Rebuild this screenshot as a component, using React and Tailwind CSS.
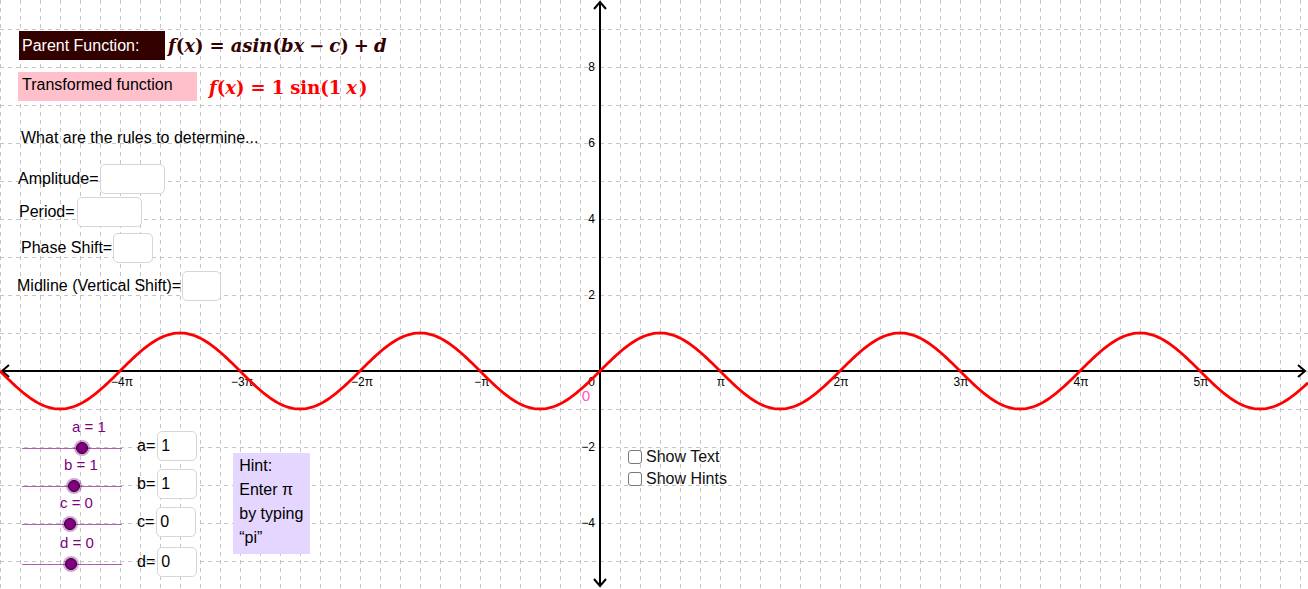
import React from 'react';

const W = 1308;
const H = 589;
const OX = 600;
const OY = 371;
const UX = 120 / Math.PI;
const UY = 38;

const sans = { fontFamily: '"Liberation Sans", Arial, sans-serif' };
const math = { fontFamily: '"DejaVu Serif", "Liberation Serif", serif' };

function curvePath() {
  let d = '';
  for (let px = 0; px <= W; px += 2) {
    const y = OY - UY * Math.sin((px - OX) / UX);
    d += `${px === 0 ? 'M' : 'L'}${px},${y.toFixed(2)} `;
  }
  return d;
}

function Graph() {
  const verticals = [];
  for (let x = 0; x <= W; x += 20) verticals.push(x);
  const horizontals = [];
  for (let k = -10; k <= 6; k++) {
    const y = OY + UY * k;
    if (y > 0 && y < H) horizontals.push(y);
  }
  const piLabels = [-4, -3, -2, -1, 1, 2, 3, 4, 5];
  const yLabels = [8, 6, 4, 2, -2, -4];

  return (
    <svg width={W} height={H} className="absolute inset-0" style={sans}>
      {verticals.map(x => (
        <line key={'v' + x} x1={x + 0.5} y1={0} x2={x + 0.5} y2={H} stroke="#c4c4c4" strokeWidth="1" strokeDasharray="4 4" />
      ))}
      {horizontals.map(y => (
        <line key={'h' + y} x1={0} y1={y + 0.5} x2={W} y2={y + 0.5} stroke="#c4c4c4" strokeWidth="1" strokeDasharray="4 4" />
      ))}

      {/* axes */}
      <line x1={2} y1={OY} x2={W - 3} y2={OY} stroke="#000" strokeWidth="2" />
      <line x1={OX} y1={2} x2={OX} y2={H - 3} stroke="#000" strokeWidth="2" />
      <polyline points={`${OX - 6},9 ${OX},2 ${OX + 6},9`} fill="none" stroke="#000" strokeWidth="2" />
      <polyline points={`${OX - 6},${H - 10} ${OX},${H - 3} ${OX + 6},${H - 10}`} fill="none" stroke="#000" strokeWidth="2" />
      <polyline points={`${W - 10},${OY - 6} ${W - 3},${OY} ${W - 10},${OY + 6}`} fill="none" stroke="#000" strokeWidth="2" />
      <polyline points={`9,${OY - 6} 2,${OY} 9,${OY + 6}`} fill="none" stroke="#000" strokeWidth="2" />

      {/* labels */}
      {piLabels.map(k => {
        const txt = k === 1 ? 'π' : k === -1 ? '−π' : `${k < 0 ? '−' : ''}${Math.abs(k)}π`;
        return (
          <text key={'p' + k} x={OX + 120 * k + (k < 0 ? 2 : 1)} y={386} fontSize="12" textAnchor="middle" fill="#000">
            {txt}
          </text>
        );
      })}
      <text x={595} y={386} fontSize="12" textAnchor="end" fill="#000">0</text>
      {yLabels.map(v => (
        <text key={'y' + v} x={595} y={OY - UY * v + 4} fontSize="12" textAnchor="end" fill="#000">
          {v < 0 ? '−' + Math.abs(v) : v}
        </text>
      ))}
      <text x={586} y={401} fontSize="15" textAnchor="middle" fill="#ff55cc">0</text>

      {/* f(x) */}
      <path d={curvePath()} fill="none" stroke="#ff0000" strokeWidth="2.8" strokeLinejoin="round" />
    </svg>
  );
}

function Box({ w, value }) {
  return (
    <div className={`${w} h-[30px] bg-white border border-[#d6d6d6] rounded-[5px] flex items-center pl-[3px] text-[16px] text-black`}>
      {value}
    </div>
  );
}

function Slider({ label, labelPad, point }) {
  return (
    <div className="flex flex-col w-[130px]">
      <span className={`${labelPad} text-[15px] leading-[16px] text-[#800080]`}>{label}</span>
      <svg width="130" height="26">
        <line x1="22" y1="13.5" x2="122" y2="13.5" stroke="#b060b0" strokeWidth="1" />
        <circle cx={point} cy="13" r="8" fill="#800080" opacity="0.35" />
        <circle cx={point} cy="13" r="5.5" fill="#800080" stroke="#2a002a" strokeWidth="1" />
      </svg>
    </div>
  );
}

function SliderRow({ name, value, labelPad, point, className }) {
  return (
    <div className={`flex items-end ${className}`}>
      <Slider label={`${name} = ${value}`} labelPad={labelPad} point={point} />
      <span className="ml-[7px] mb-[6px] text-[16px] leading-[18px]">{name}=</span>
      <div className="ml-[2px]">
        <Box w="w-[40px]" value={value} />
      </div>
    </div>
  );
}

function Checkbox({ label }) {
  return (
    <div className="flex items-center h-[22px]">
      <div className="w-[14px] h-[14px] border-[1.5px] border-[#777] rounded-[3px] bg-white" />
      <span className="ml-[4px] text-[16px] text-[#111]">{label}</span>
    </div>
  );
}

export default function App() {
  return (
    <div className="relative w-[1308px] h-[589px] overflow-hidden bg-white text-black" style={sans}>
      <Graph />

      <div className="absolute inset-0 flex">
        {/* left column: formulas, questions, sliders */}
        <div className="flex flex-col w-[400px]">
          <div className="flex items-center mt-[31px] pl-[19px]">
            <div className="w-[146px] h-[29px] bg-[#330000] text-white text-[16px] flex items-center pl-[3px]">
              Parent Function:
            </div>
            <div className="ml-[3px] text-[18px] font-bold text-[#330000] whitespace-nowrap" style={math}>
              <i>f</i>(<i>x</i>)<span className="mx-[6px]">=</span><i>asin</i>(<i>bx</i>
              <span className="mx-[5px]">−</span><i>c</i>)<span className="mx-[5px]">+</span><i>d</i>
            </div>
          </div>

          <div className="flex items-center mt-[11px] pl-[18px]">
            <div className="w-[179px] h-[29px] bg-[#ffc0cb] text-[16px] flex items-center pl-[4px] pb-[2px]">
              Transformed function
            </div>
            <div className="ml-[12px] mt-[3px] text-[18px] font-bold text-[#ff0000] whitespace-nowrap" style={math}>
              <i>f</i>(<i>x</i>)<span className="mx-[6px]">=</span>1<span className="ml-[6px]">sin</span>(1<span className="ml-[5px] mr-[2px]"><i>x</i></span>)
            </div>
          </div>

          <div className="mt-[28px] pl-[21px] text-[16px] leading-[18px]">What are the rules to determine...</div>

          <div className="flex items-center mt-[17px] pl-[18px] text-[16px]">
            <span>Amplitude=</span>
            <div className="ml-[1px]"><Box w="w-[65px]" /></div>
          </div>
          <div className="flex items-center mt-[3px] pl-[19px] text-[16px]">
            <span>Period=</span>
            <div className="ml-[2px]"><Box w="w-[65px]" /></div>
          </div>
          <div className="flex items-center mt-[6px] pl-[21px] text-[16px]">
            <span>Phase Shift=</span>
            <div className="ml-[1px]"><Box w="w-[40px]" /></div>
          </div>
          <div className="flex items-center mt-[8px] pl-[17px] text-[16px]">
            <span>Midline (Vertical Shift)=</span>
            <div className="ml-[1px]"><Box w="w-[39px]" /></div>
          </div>

          <div className="flex mt-[118px]">
            <div className="flex flex-col">
              <SliderRow name="a" value="1" labelPad="pl-[72px]" point={82} />
              <SliderRow name="b" value="1" labelPad="pl-[64px]" point={74} className="-mt-[4px]" />
              <SliderRow name="c" value="0" labelPad="pl-[60px]" point={70} className="-mt-[4px]" />
              <SliderRow name="d" value="0" labelPad="pl-[60px]" point={71} className="-mt-[2px]" />
            </div>
            <div className="ml-[36px] mt-[34px] w-[77px] h-[101px] bg-[#e5d6ff] pl-[6px] pt-[1px] text-[16px] leading-[24px]">
              <div>Hint:</div>
              <div>Enter π</div>
              <div>by typing</div>
              <div>“pi”</div>
            </div>
          </div>
        </div>

        {/* checkboxes */}
        <div className="flex flex-col ml-[228px] mt-[446px]">
          <Checkbox label="Show Text" />
          <Checkbox label="Show Hints" />
        </div>
      </div>
    </div>
  );
}
